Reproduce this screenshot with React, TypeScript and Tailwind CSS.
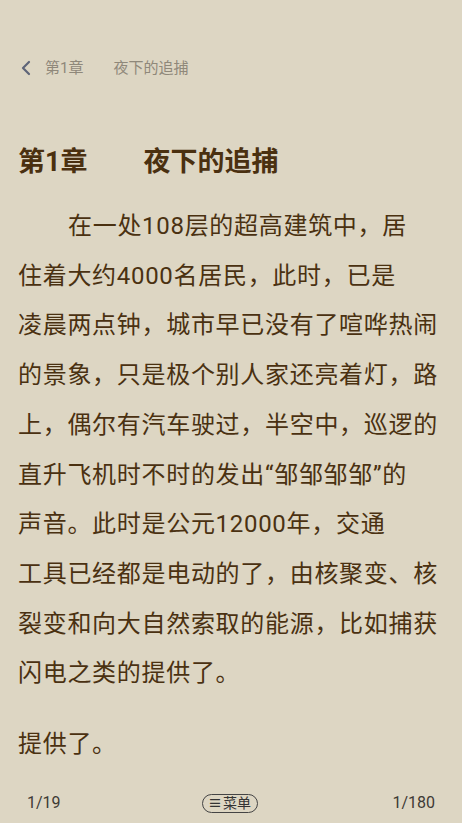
import React from "react";

const font = { fontFamily: 'Roboto, "Noto Sans CJK SC", "Noto Sans", sans-serif' };

export default function App() {
  const para1 = [
    "在一处108层的超高建筑中，居",
    "住着大约4000名居民，此时，已是",
    "凌晨两点钟，城市早已没有了喧哗热闹",
    "的景象，只是极个别人家还亮着灯，路",
    "上，偶尔有汽车驶过，半空中，巡逻的",
    "直升飞机时不时的发出“邹邹邹邹”的",
    "声音。此时是公元12000年，交通",
    "工具已经都是电动的了，由核聚变、核",
    "裂变和向大自然索取的能源，比如捕获",
    "闪电之类的提供了。",
  ];
  return (
    <div className="w-[462px] h-[823px] bg-[#ddd6c3] flex flex-col overflow-hidden" style={font}>
      <div className="pt-[56px] h-[80px] flex items-start">
        <div className="h-6 flex items-center pl-[20px] text-[15px] text-[#8f887a]">
          <svg width="12" height="16" viewBox="0 0 12 16" className="mr-[13px]">
            <path d="M9 2 L3 8 L9 14" fill="none" stroke="#5e6578" strokeWidth="2.2" strokeLinecap="round" strokeLinejoin="round" />
          </svg>
          <span>第1章</span>
          <span className="ml-[30px]">夜下的追捕</span>
        </div>
      </div>
      <div className="mt-[64px] pl-[18px] h-[36px] flex items-center text-[27px] font-bold text-[#4a3010] whitespace-nowrap">
        <span>第1章</span>
        <span className="ml-[56px]">夜下的追捕</span>
      </div>
      <div className="mt-[22px] pl-[18px] text-[24px] tracking-[0.7px] text-[#4a3111] leading-[49.7px] whitespace-nowrap">
        {para1.map((l, i) => (
          <div key={i} className={i === 0 ? "pl-[50px]" : ""}>{l}</div>
        ))}
        <div className="mt-[21px]">提供了。</div>
      </div>
      <div className="mt-auto h-[40px] px-[27px] flex items-center justify-between text-[16px] text-[#3d3a35]">
        <span>1/19</span>
        <span className="ml-[6px] h-[19px] w-[56px] rounded-full border border-[#444] flex items-center justify-center text-[14px] leading-none text-[#333]">
          <span className="mr-[1px] font-bold">≡</span>菜单
        </span>
        <span>1/180</span>
      </div>
    </div>
  );
}
